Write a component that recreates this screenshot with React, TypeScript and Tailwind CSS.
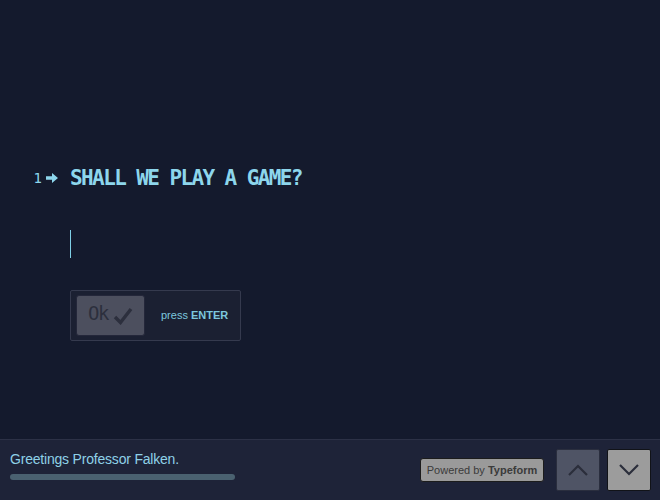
import React from 'react';

const Chevron = ({ up }: { up?: boolean }) => (
  <svg width="22" height="12" viewBox="0 0 22 12" fill="none">
    <path
      d={up ? 'M2 11 L11 2 L20 11' : 'M2 1 L11 10 L20 1'}
      stroke="#2b2e3b"
      strokeWidth="2.2"
    />
  </svg>
);

const App = () => {
  return (
    <div className="w-[660px] h-[500px] flex flex-col bg-[#141a2d] font-['Liberation_Sans',Arial,sans-serif]">
      <main className="flex-1 pt-[165px]">
        <div className="flex items-center">
          <div className="w-[70px] flex items-center justify-end pr-[12px] gap-[4px] text-[#8dd6ec]">
            <span className="text-[14px] font-['DejaVu_Sans_Mono',monospace] leading-none">1</span>
            <svg width="12" height="10" viewBox="0 0 12 10">
              <path d="M0 3.2 H6 V0 L12 5 L6 10 V6.8 H0 Z" fill="#8dd6ec" />
            </svg>
          </div>
          <h1 className="text-[21px] font-bold tracking-[-1.6px] text-[#8dd6ec] font-['DejaVu_Sans_Mono',monospace] leading-[26px]">
            SHALL WE PLAY A GAME?
          </h1>
        </div>

        <div className="ml-[70px] mt-[39px] w-px h-[28px] bg-[#7fd0e6]" />

        <div className="ml-[70px] mt-[32px] w-[171px] h-[51px] flex items-center border border-[#353a4e] bg-[#1b2032] rounded-[2px] pl-[5px]">
          <button className="w-[69px] h-[41px] flex items-center justify-center gap-[5px] bg-[#4c4f5e] border border-[#24273a] rounded-[3px]">
            <span className="text-[19px] text-[#2c2f3d] font-['DejaVu_Sans_Mono',monospace] tracking-[-1.5px] leading-none pb-[4px]">Ok</span>
            <svg width="20" height="18" viewBox="0 0 20 18">
              <path d="M2 10 L7.5 15.5 L18 2" stroke="#2c2f3d" strokeWidth="3.4" fill="none" />
            </svg>
          </button>
          <span className="ml-[16px] text-[11px] text-[#7cc7de]">
            press <b>ENTER</b>
          </span>
        </div>
      </main>

      <footer className="h-[61px] flex items-center border-t border-[#2c3146] bg-[#1e2338] pl-[10px] pr-[9px]">
        <div className="flex-1 self-start flex flex-col gap-[7px] pt-[11px]">
          <span className="text-[14px] leading-[16px] text-[#8ed1e7] tracking-[-0.2px]">Greetings Professor Falken.</span>
          <div className="w-[225px] h-[6px] rounded-full bg-[#4a6170]" />
        </div>
        <div className="w-[124px] h-[24px] flex items-center justify-center border border-[#1c1c1c] bg-[#9a9a9a] rounded-[3px] text-[11px] text-[#3b3b3b] mr-[12px]">
          Powered by&nbsp;<b>Typeform</b>
        </div>
        <button className="w-[44px] h-[42px] flex items-center justify-center bg-[#4f5465] border border-[#2a2e3e] rounded-[2px] mr-[7px]">
          <Chevron up />
        </button>
        <button className="w-[44px] h-[42px] flex items-center justify-center bg-[#9c9c9c] border border-[#111318] rounded-[2px]">
          <Chevron />
        </button>
      </footer>
    </div>
  );
};

export default App;
